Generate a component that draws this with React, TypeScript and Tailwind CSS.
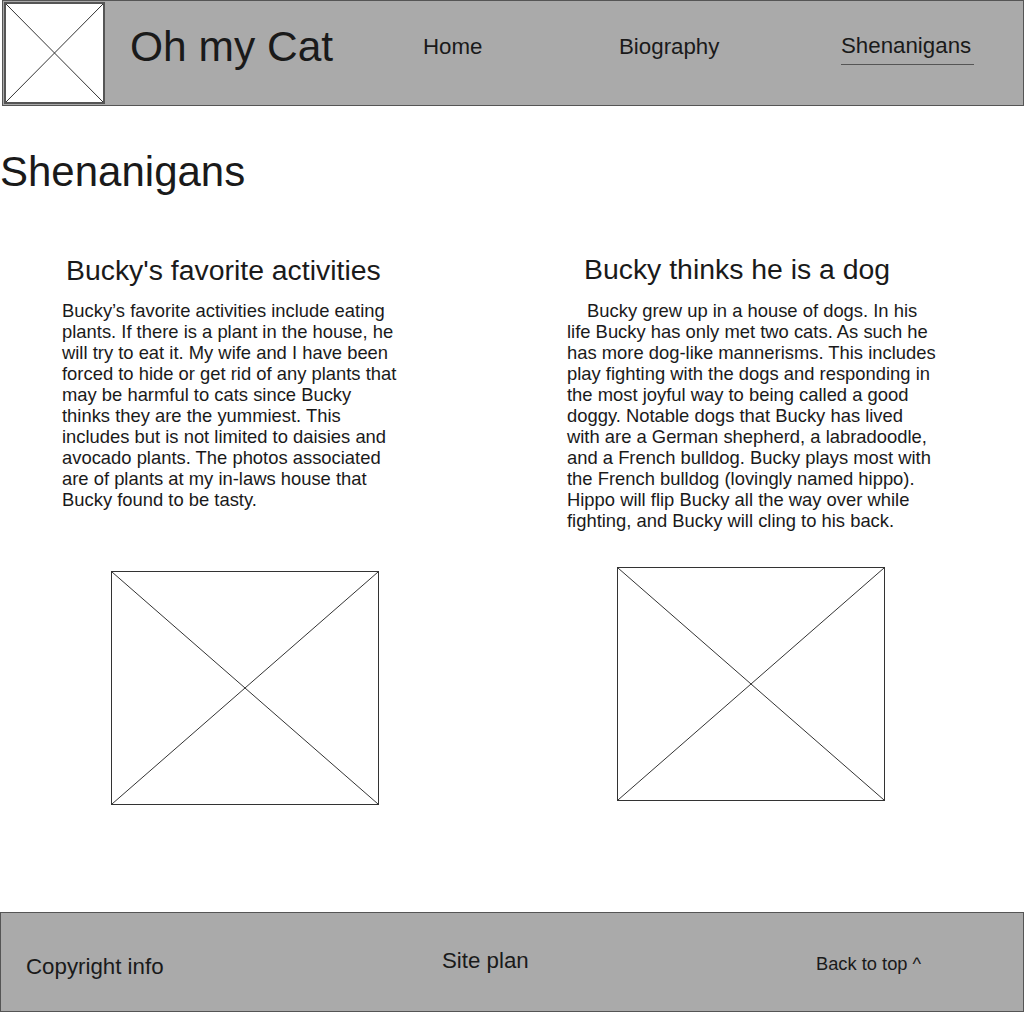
import React from "react";

function XBox({ className }: { className: string }) {
  return (
    <div className={className}>
      <svg width="100%" height="100%" viewBox="0 0 100 100" preserveAspectRatio="none" className="block">
        <line x1="0" y1="0" x2="100" y2="100" stroke="#333" strokeWidth="1" vectorEffect="non-scaling-stroke" />
        <line x1="100" y1="0" x2="0" y2="100" stroke="#333" strokeWidth="1" vectorEffect="non-scaling-stroke" />
      </svg>
    </div>
  );
}

export default function App() {
  return (
    <div
      className="w-[1024px] h-[1014px] bg-white text-[#1a1a1a] overflow-hidden"
      style={{ fontFamily: '"Liberation Sans", Arial, sans-serif' }}
    >
      <header className="ml-[2px] w-[1022px] h-[106px] border border-[#555] bg-[#aaaaaa] flex items-start">
        <XBox className="ml-[1px] mt-[1px] w-[101px] h-[102px] border-2 border-[#555] bg-white" />
        <div className="ml-[25px] w-[293px] mt-[14px] text-[42.5px] leading-normal">Oh my Cat</div>
        <div className="w-[196px] mt-[29px] text-[22.3px] leading-normal">Home</div>
        <div className="w-[222px] mt-[29px] text-[22.3px] leading-normal">Biography</div>
        <div className="mt-[28px] text-[22.3px] leading-normal pr-[3px] pb-[2px] border-b border-[#555]">Shenanigans</div>
      </header>

      <main className="h-[806px]">
        <h1 className="pt-[34px] text-[42px] leading-normal font-normal">Shenanigans</h1>
        <div className="flex">
          <section className="w-[505px] pl-[62px]">
            <h2 className="ml-[4px] mt-[46px] text-[28.4px] leading-normal">Bucky's favorite activities</h2>
            <p className="mt-[8px] w-[340px] text-[18.4px] leading-[21px]">
              Bucky’s favorite activities include eating plants. If there is a plant in the house, he will try to eat
              it. My wife and I have been forced to hide or get rid of any plants that may be harmful to cats since
              Bucky thinks they are the yummiest. This includes but is not limited to daisies and avocado plants. The
              photos associated are of plants at my in-laws house that Bucky found to be tasty.
            </p>
            <XBox className="mt-[61px] ml-[49px] w-[268px] h-[234px] border border-[#333]" />
          </section>
          <section className="pl-[62px]">
            <h2 className="ml-[17px] mt-[45px] text-[28.4px] leading-normal">Bucky thinks he is a dog</h2>
            <p className="mt-[9px] w-[372px] text-[18.4px] leading-[21px] indent-[20px]">
              Bucky grew up in a house of dogs. In his life Bucky has only met two cats. As such he has more dog-like
              mannerisms. This includes play fighting with the dogs and responding in the most joyful way to being
              called a good doggy. Notable dogs that Bucky has lived with are a German shepherd, a labradoodle, and a
              French bulldog. Bucky plays most with the French bulldog (lovingly named hippo). Hippo will flip Bucky
              all the way over while fighting, and Bucky will cling to his back.
            </p>
            <XBox className="mt-[36px] ml-[50px] w-[268px] h-[234px] border border-[#333]" />
          </section>
        </div>
      </main>

      <footer className="w-[1024px] h-[100px] border border-[#555] bg-[#aaaaaa] flex items-start">
        <div className="ml-[25px] w-[416px] mt-[37px] text-[22.3px] leading-normal">Copyright info</div>
        <div className="w-[374px] mt-[31px] text-[22.3px] leading-normal">Site plan</div>
        <div className="mt-[37px] text-[18.3px] leading-normal">Back to top ^</div>
      </footer>
    </div>
  );
}
